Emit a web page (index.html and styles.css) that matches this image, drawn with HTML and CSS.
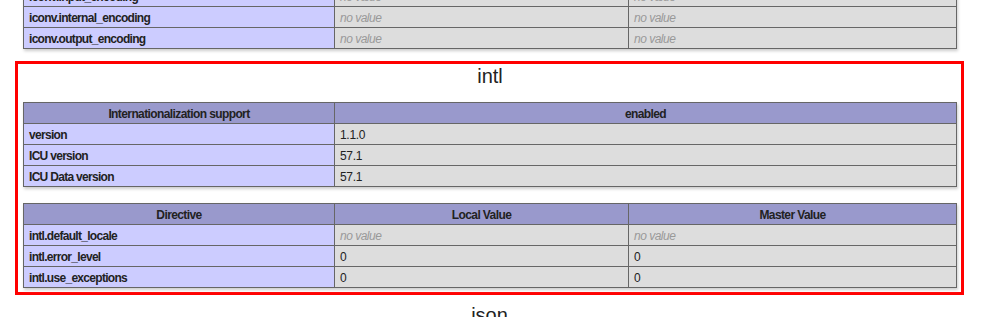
FILE: index.html
```html
<!DOCTYPE html>
<html>
<head>
<meta charset="utf-8">
<title>phpinfo()</title>
<link rel="stylesheet" href="styles.css">
</head>
<body>
<div class="page">
  <table class="info">
    <tr><td class="e">iconv.input_encoding</td><td class="v mid"><i>no value</i></td><td class="v"><i>no value</i></td></tr>
    <tr><td class="e">iconv.internal_encoding</td><td class="v mid"><i>no value</i></td><td class="v"><i>no value</i></td></tr>
    <tr><td class="e">iconv.output_encoding</td><td class="v mid"><i>no value</i></td><td class="v"><i>no value</i></td></tr>
  </table>
  <div class="section">
    <h2 class="title">intl</h2>
    <table class="info first">
      <tr class="h"><th class="hc">Internationalization support</th><th>enabled</th></tr>
      <tr><td class="e">version</td><td class="v">1.1.0</td></tr>
      <tr><td class="e">ICU version</td><td class="v">57.1</td></tr>
      <tr><td class="e">ICU Data version</td><td class="v">57.1</td></tr>
    </table>
    <table class="info second">
      <tr class="h"><th class="hc">Directive</th><th class="mid">Local Value</th><th>Master Value</th></tr>
      <tr><td class="e">intl.default_locale</td><td class="v mid"><i>no value</i></td><td class="v"><i>no value</i></td></tr>
      <tr><td class="e">intl.error_level</td><td class="v mid">0</td><td class="v">0</td></tr>
      <tr><td class="e">intl.use_exceptions</td><td class="v mid">0</td><td class="v">0</td></tr>
    </table>
  </div>
  <h2 class="title next">json</h2>
</div>
</body>
</html>
```
FILE: styles.css
```css
html, body {
  margin: 0;
  padding: 0;
  background: #fff;
}
body {
  color: #222;
  font-family: "Liberation Sans", Arial, sans-serif;
  overflow: hidden;
}
.page {
  width: 949px;
  margin: -15px 0 0 15px;
}
.info {
  width: 934px;
  border-collapse: collapse;
  border: 0;
  box-shadow: 1px 2px 3px #ccc;
  margin-left: 8px;
}
.info td, .info th {
  border: 1px solid #666;
  font-size: 12px;
  line-height: 12px;
  height: 12px;
  padding: 5px 5px 3px;
  vertical-align: top;
  text-align: left;
  letter-spacing: -0.3px;
}
.info .h th {
  background: #99c;
  font-weight: bold;
  text-align: center;
  letter-spacing: -0.6px;
}
.info .e {
  background: #ccf;
  width: 300px;
  font-weight: bold;
  letter-spacing: -0.7px;
}
.info .hc {
  width: 300px;
}
.info .v {
  background: #ddd;
}
.info .mid {
  width: 283px;
}
.info .v i {
  color: #999;
  letter-spacing: -0.5px;
}
.section {
  margin-top: 12px;
  border: 3px solid #f00;
  padding: 0 4px 4px 5px;
}
.section .info {
  margin-left: 0;
}
.title {
  margin: 0;
  font-size: 20px;
  line-height: 24px;
  font-weight: normal;
  text-align: center;
}
.first {
  margin-top: 14px;
}
.second {
  margin-top: 16px;
}
.next {
  margin-top: 8px;
}
```
